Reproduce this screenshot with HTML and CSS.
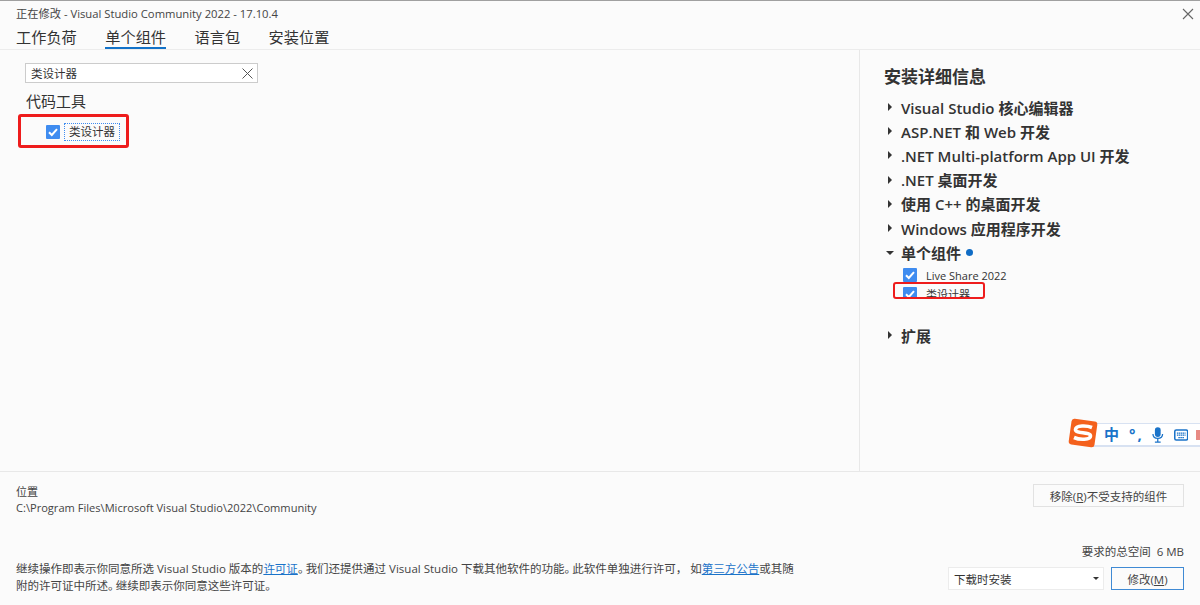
FILE: index.html
```html
<!DOCTYPE html>
<html lang="zh-CN">
<head>
<meta charset="utf-8">
<title>Visual Studio Installer</title>
<link rel="stylesheet" href="styles.css">
</head>
<body>
<div class="app">
  <header class="head">
    <div class="titlebar">
      <span class="title">正在修改 - Visual Studio Community 2022 - 17.10.4</span>
      <svg class="close" width="12" height="12" viewBox="0 0 12 12"><path d="M1 1l10 10M11 1L1 11" stroke="#666" stroke-width="1.1" fill="none"/></svg>
    </div>
    <nav class="tabs">
      <span class="tab">工作负荷</span>
      <span class="tab active">单个组件</span>
      <span class="tab">语言包</span>
      <span class="tab">安装位置</span>
    </nav>
  </header>
  <main class="main">
    <section class="left">
      <div class="search">
        <span>类设计器</span>
        <svg width="11" height="11" viewBox="0 0 11 11"><path d="M.5.5l10 10M10.500.5l-10 10" stroke="#555" stroke-width="1" fill="none"/></svg>
      </div>
      <h2 class="group">代码工具</h2>
      <div class="option">
        <svg class="check" width="14" height="14" viewBox="0 0 14 14"><rect width="14" height="14" rx="1" fill="#3f8cf0"/><path d="M3 7.200l2.800 2.800L11 4.200" stroke="#fff" stroke-width="2" fill="none"/></svg>
        <span class="focus">类设计器</span>
        <span class="mark mark-left"></span>
      </div>
    </section>
    <aside class="right">
      <h1 class="details">安装详细信息</h1>
      <ul class="tree">
        <li class="row"><i class="arrow"></i>Visual Studio 核心编辑器</li>
        <li class="row"><i class="arrow"></i>ASP.NET 和 Web 开发</li>
        <li class="row"><i class="arrow"></i>.NET Multi-platform App UI 开发</li>
        <li class="row"><i class="arrow"></i>.NET 桌面开发</li>
        <li class="row"><i class="arrow"></i>使用 C++ 的桌面开发</li>
        <li class="row"><i class="arrow"></i>Windows 应用程序开发</li>
        <li class="row"><i class="arrow down"></i>单个组件<b class="dot"></b></li>
        <li class="sub first">
          <span class="clip">
            <svg class="check" width="14" height="14" viewBox="0 0 14 14"><rect width="14" height="14" rx="1" fill="#3f8cf0"/><path d="M3 7.200l2.800 2.800L11 4.200" stroke="#fff" stroke-width="2" fill="none"/></svg>
            <span class="sub-text">Live Share 2022</span>
          </span>
        </li>
        <li class="sub">
          <span class="clip cut">
            <svg class="check" width="14" height="14" viewBox="0 0 14 14"><rect width="14" height="14" rx="1" fill="#3f8cf0"/><path d="M3 7.200l2.800 2.800L11 4.200" stroke="#fff" stroke-width="2" fill="none"/></svg>
            <span class="sub-text">类设计器</span>
          </span>
          <span class="mark mark-right"></span>
        </li>
        <li class="row ext"><i class="arrow"></i>扩展</li>
      </ul>
      <div class="ime">
        <svg class="ime-logo" width="32" height="30" viewBox="0 0 32 30"><rect x="3" y="2" width="26" height="26" rx="3" fill="#f4611d" transform="rotate(8 16 15)"/><path d="M25 9.500C20 7.500 9 7 8.500 11.500c-.5 4.500 15 2 15 6.500 0 4-11 4-16.500 1.500" stroke="#fff" stroke-width="3.600" fill="none"/></svg>
        <div class="ime-bar">
          <span class="ime-zh">中</span>
          <span class="ime-punct">°,</span>
          <svg width="12" height="16" viewBox="0 0 12 16"><rect x="3" y="0" width="6" height="10" rx="3" fill="#1a73c9"/><path d="M1 7c0 6 10 6 10 0M6 12v3M3 15.500h6" stroke="#1a73c9" stroke-width="1.300" fill="none"/></svg>
          <svg width="15" height="12" viewBox="0 0 15 12"><rect x=".8" y=".8" width="13.400" height="10.400" rx="1.500" fill="none" stroke="#1a73c9" stroke-width="1.600"/><path d="M3 4h9M3 6.200h9M4.500 8.700h6" stroke="#1a73c9" stroke-width="1.200" stroke-dasharray="1.600 .5" fill="none"/></svg>
          <i class="ime-cut"></i>
        </div>
      </div>
    </aside>
  </main>
  <footer class="foot">
    <div class="foot-left">
      <div class="loc">
        <div>位置</div>
        <div>C:\Program Files\Microsoft Visual Studio\2022\Community</div>
      </div>
      <p class="legal">继续操作即表示你同意所选 Visual Studio 版本的<a>许可证</a><span class="pn">。</span>我们还提供通过 Visual Studio 下载其他软件的功能<span class="pn">。</span>此软件单独进行许可，<span class="cm">如</span><a>第三方公告</a>或其随附的许可证中所述<span class="pn">。</span>继续即表示你同意这些许可证。</p>
    </div>
    <div class="foot-right">
      <button class="btn remove">移除(<u>R</u>)不受支持的组件</button>
      <div class="space">要求的总空间&nbsp;&nbsp;6 MB</div>
      <div class="actions">
        <div class="select"><span>下载时安装</span><i class="caret"></i></div>
        <button class="btn modify">修改(<u>M</u>)</button>
      </div>
    </div>
  </footer>
</div>
</body>
</html>
```
FILE: styles.css
```css
* { box-sizing: border-box; }
html, body { margin: 0; height: 100%; }
body {
  background: #fbfbfb;
  color: #333;
  font-family: "Open Sans", "Noto Sans CJK SC", sans-serif;
  overflow: hidden;
}
.app { width: 1200px; height: 605px; display: flex; flex-direction: column; border-top: 1px solid #a0a0a0; }

.head { height: 49px; border-bottom: 1px solid #ececec; padding: 0 16px; flex: none; }
.titlebar { height: 23px; display: flex; justify-content: space-between; align-items: center; padding-top: 2px; }
.title { font-size: 11.250px; line-height: 20px; color: #444; }
.close { margin-right: -10px; }
.tabs { display: flex; gap: 28.500px; height: 25px; }
.tab { font-size: 15.200px; line-height: 24px; padding-top: 1px; color: #333; height: 25px; }
.tab.active { border-bottom: 2px solid #1272c8; }

.main { flex: 1; display: flex; min-height: 0; border-bottom: 1px solid #e8e8e8; }
.left { width: 859px; padding: 13px 0 0 25px; }
.search {
  width: 233px; height: 20px; border: 1px solid #ccc; background: #fff;
  display: flex; justify-content: space-between; align-items: center;
  padding: 0 4px 0 5px; font-size: 11.500px; color: #333;
}
.group { font-size: 15px; font-weight: 400; line-height: 20px; margin: 8px 0 0 1px; color: #333; }
.option { position: relative; display: flex; align-items: center; gap: 4px; margin: 11px 0 0 21px; height: 20px; }
.check { flex: none; }
.focus { font-size: 11.500px; line-height: 16px; padding: 0 4px; border: 1px dotted #3f8cf0; color: #333; }
.mark { position: absolute; border: 3px solid #ee1c1c; border-radius: 3px; }
.mark-left { left: -28px; top: -8px; width: 111px; height: 34px; }
.mark-right { left: 9px; top: -3px; width: 92px; height: 17px; border-width: 2.500px; }

.right { width: 341px; position: relative; border-left: 1px solid #e8e8e8; padding: 15px 0 0 24px; }
.details { font-size: 17px; font-weight: 600; line-height: 24px; margin: 0 0 6px; color: #333; }
.tree { list-style: none; margin: 0; padding: 0; }
.row { position: relative; display: flex; align-items: center; height: 24.200px; padding-left: 17px; font-size: 15px; font-weight: 600; color: #333; white-space: nowrap; }
.arrow { position: absolute; left: 4px; top: 8px; border-left: 4px solid #333; border-top: 4px solid transparent; border-bottom: 4px solid transparent; }
.arrow.down { left: 2px; top: 11px; border-top: 4px solid #333; border-left: 4px solid transparent; border-right: 4px solid transparent; border-bottom: 0; }
.dot { width: 7px; height: 7px; border-radius: 50%; background: #0f6cc5; margin-left: 5px; }
.sub { position: relative; height: 18px; padding-left: 19px; }
.sub.first { margin-top: 3px; }
.clip { display: flex; align-items: flex-start; gap: 9px; height: 18px; overflow: hidden; font-size: 11px; line-height: 16px; color: #333; padding-top: 1px; }
.clip.cut { height: 14px; padding-top: 2px; }
.ext { margin-top: 20px; }

.ime { position: absolute; right: 0; top: 368px; width: 133px; height: 30px; }
.ime-logo { position: absolute; left: 0; top: 0; z-index: 1; }
.ime-bar {
  position: absolute; left: 22px; right: 0; top: 5px; height: 24px;
  background: #fff; border-top: 1px solid #d8e2f2; border-bottom: 2px solid #d8e2f2;
  display: flex; align-items: center; gap: 10px; padding-left: 15px; overflow: hidden;
}
.ime-zh { font-size: 15px; font-weight: 700; color: #1a73c9; line-height: 1; }
.ime-punct { font-size: 15px; font-weight: 700; color: #1a73c9; line-height: 1; letter-spacing: 2px; width: 13px; }
.ime-cut { width: 4px; height: 10px; background: #e88a84; flex: none; margin-left: -2px; }

.foot { height: 133px; flex: none; display: flex; justify-content: space-between; padding: 12px 16px 0; }
.foot-left { width: 790px; display: flex; flex-direction: column; }
.loc { font-size: 11.100px; line-height: 16px; color: #444; }
.legal { margin: 44px 0 0; width: 784px; font-size: 11.500px; line-height: 17px; color: #444; }
.legal a { color: #1a73c9; text-decoration: underline; }
.pn { font-feature-settings: "halt"; margin-right: 2px; }
.cm { margin-left: 3px; }
.foot-right { width: 236px; display: flex; flex-direction: column; align-items: flex-end; }
.btn { font-family: inherit; font-size: 11.500px; color: #444; background: #fbfbfb; border: 1px solid #e2e2e2; padding: 0; }
.remove { width: 151px; height: 23px; }
.space { margin-top: 37px; font-size: 11.500px; line-height: 16px; color: #444; }
.actions { display: flex; gap: 7px; margin-top: 7px; }
.select {
  width: 156px; height: 23px; background: #fff; border: 1px solid #ececec;
  display: flex; justify-content: space-between; align-items: center; padding: 0 4px 0 5px; font-size: 11.500px; color: #333;
}
.caret { border-top: 3px solid #333; border-left: 3px solid transparent; border-right: 3px solid transparent; }
.modify { width: 73px; height: 23px; border-color: #3f8ad4; }
```
